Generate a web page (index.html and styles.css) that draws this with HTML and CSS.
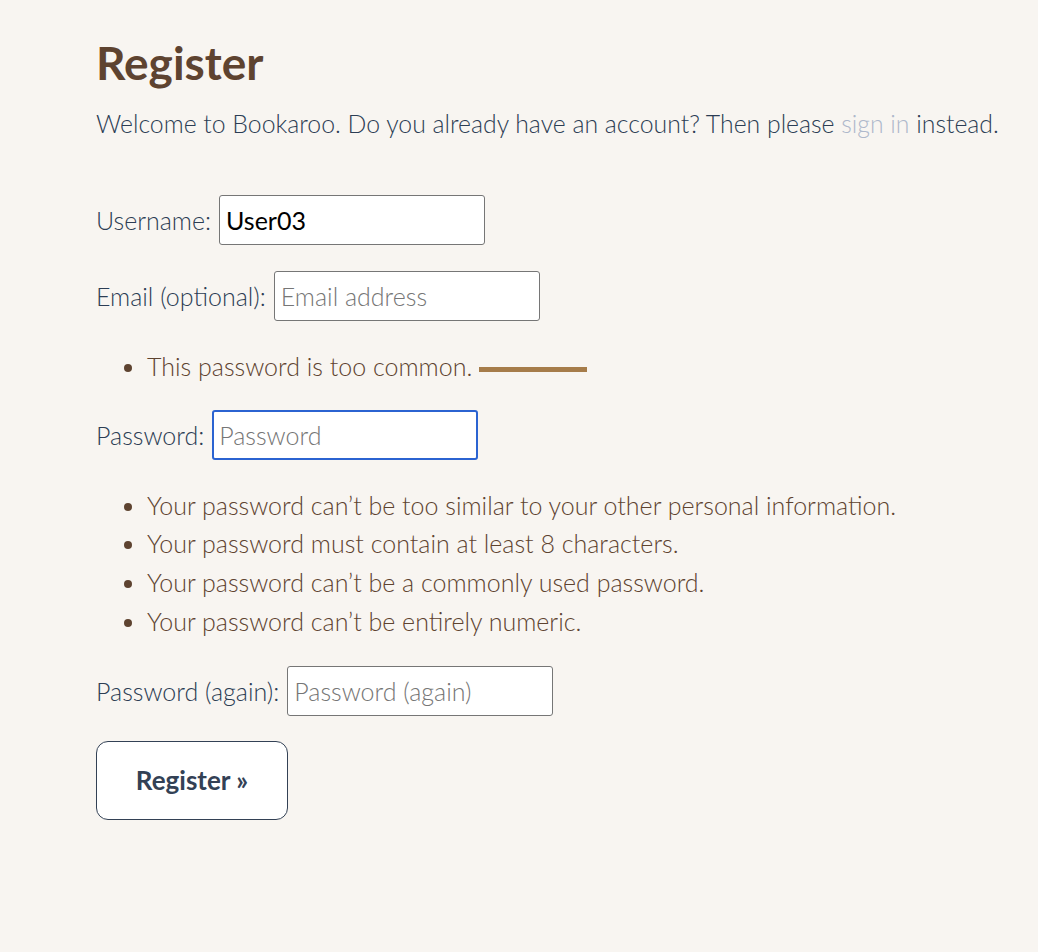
FILE: index.html
```html
<!DOCTYPE html>
<html lang="en">
<head>
<meta charset="utf-8">
<title>Register</title>
<link rel="stylesheet" href="styles.css">
</head>
<body>
<main class="page">
  <h1 class="title">Register</h1>
  <p class="intro">Welcome to Bookaroo. Do you already have an account? Then please <a class="link" href="#">sign in</a> instead.</p>
  <form class="form">
    <div class="row">
      <label class="label" for="username">Username:</label>
      <input class="field" id="username" type="text" value="User03">
    </div>
    <div class="row">
      <label class="label" for="email">Email (optional):</label>
      <input class="field" id="email" type="email" placeholder="Email address">
    </div>
    <ul class="errors">
      <li>This password is too common. <span class="bar"></span></li>
    </ul>
    <div class="row">
      <label class="label" for="pw1">Password:</label>
      <input class="field field-focus" id="pw1" type="password" placeholder="Password">
    </div>
    <ul class="help">
      <li>Your password can’t be too similar to your other personal information.</li>
      <li>Your password must contain at least 8 characters.</li>
      <li>Your password can’t be a commonly used password.</li>
      <li>Your password can’t be entirely numeric.</li>
    </ul>
    <div class="row row-last">
      <label class="label" for="pw2">Password (again):</label>
      <input class="field" id="pw2" type="password" placeholder="Password (again)">
    </div>
    <button class="btn" type="button">Register »</button>
  </form>
</main>
</body>
</html>
```

FILE: styles.css
```css
html, body {
  margin: 0;
  padding: 0;
  background: #f8f5f1;
}
body {
  font-family: Lato, "Liberation Sans", sans-serif;
  font-weight: 300;
  font-size: 25px;
  color: #2c3d54;
}
.page {
  padding: 35px 0 0 96px;
}
.title {
  margin: 0;
  font-size: 46px;
  font-weight: 700;
  line-height: 56px;
  color: #5e4330;
}
.intro {
  margin: 15px 0 0;
  font-size: 24.8px;
  line-height: 36px;
}
.link {
  color: #aeb8cb;
  text-decoration: none;
}
.form {
  margin-top: 53px;
}
.row {
  display: flex;
  align-items: center;
  gap: 8px;
  margin-bottom: 26px;
}
.row-last {
  margin-bottom: 25px;
}
.label {
  line-height: 50px;
}
.field {
  box-sizing: border-box;
  width: 266px;
  height: 50px;
  padding: 0 6px;
  border: 1px solid #767676;
  border-radius: 3px;
  background: #fff;
  font-family: Lato, "Liberation Sans", sans-serif;
  font-size: 25px;
  font-weight: 400;
  color: #000;
  outline: none;
}
.field::placeholder {
  color: #767676;
  font-weight: 300;
}
.field-focus {
  border: 2px solid #2b63d1;
  padding: 0 5px;
}
.errors, .help {
  margin: 0;
  padding-left: 51px;
  color: #5e4330;
  line-height: 38.7px;
}
.errors {
  margin: 0 0 24px;
}
.help {
  margin: 0 0 25px;
}
.bar {
  display: inline-block;
  width: 108px;
  height: 5px;
  background: #a67c4a;
  vertical-align: middle;
}
.btn {
  box-sizing: border-box;
  width: 192px;
  height: 79px;
  border: 1px solid #334155;
  border-radius: 12px;
  background: #fff;
  font-family: Lato, "Liberation Sans", sans-serif;
  font-size: 26px;
  font-weight: 700;
  color: #334155;
  cursor: pointer;
}
```
